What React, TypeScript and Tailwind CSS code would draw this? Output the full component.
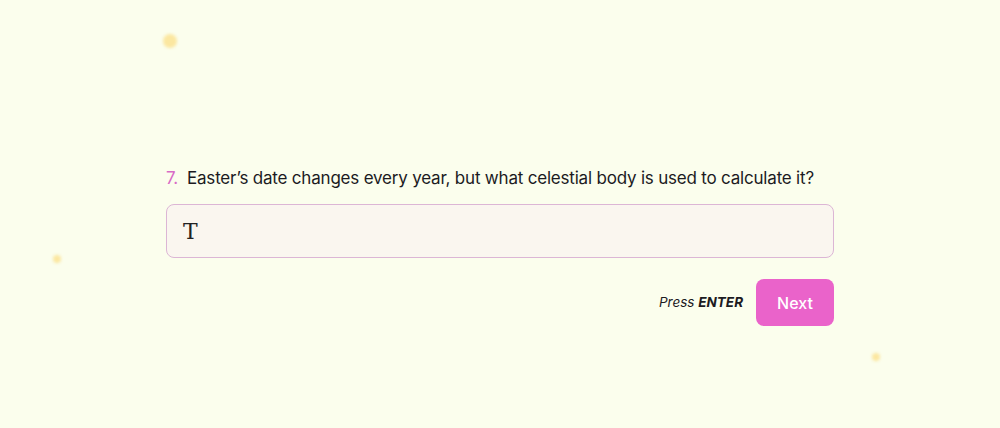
import React from "react";

const Dot: React.FC<{ className: string }> = ({ className }) => (
  <span className={`absolute rounded-full bg-[#fbe7a0] blur-[1.5px] ${className}`} />
);

export default function App() {
  return (
    <div
      className="relative h-[428px] w-[1000px] overflow-hidden bg-[#fbfeed]"
      style={{ fontFamily: "Inter, 'Noto Sans', sans-serif" }}
    >
      <Dot className="left-[163px] top-[34px] h-[14px] w-[14px]" />
      <Dot className="left-[53px] top-[255px] h-[8px] w-[8px]" />
      <Dot className="left-[872px] top-[353px] h-[8px] w-[8px]" />

      <div className="mx-auto flex w-[668px] flex-col pt-[166px]">
        <div className="flex items-center gap-[9px] text-[17px] leading-[24px] tracking-[-0.2px] text-[#1c1b1f]">
          <span className="text-[#d86bc6]">7.</span>
          <span>Easter’s date changes every year, but what celestial body is used to calculate it?</span>
        </div>
        <div className="mt-[14px] flex h-[54px] items-center rounded-[8px] border border-[#dcb6d5] bg-[#faf6ef] px-[16px]">
          <span
            className="text-[22px] text-[#222]"
            style={{ fontFamily: "'DejaVu Serif', 'Liberation Serif', serif" }}
          >
            T
          </span>
        </div>
        <div className="mt-[21px] flex items-center justify-end gap-[13px]">
          <span className="text-[13.5px] italic text-[#1c1b1f]">
            Press <b className="font-bold">ENTER</b>
          </span>
          <button className="h-[47px] w-[78px] rounded-[8px] bg-[#ea63ca] text-[16px] font-medium text-white">
            Next
          </button>
        </div>
      </div>
    </div>
  );
}
